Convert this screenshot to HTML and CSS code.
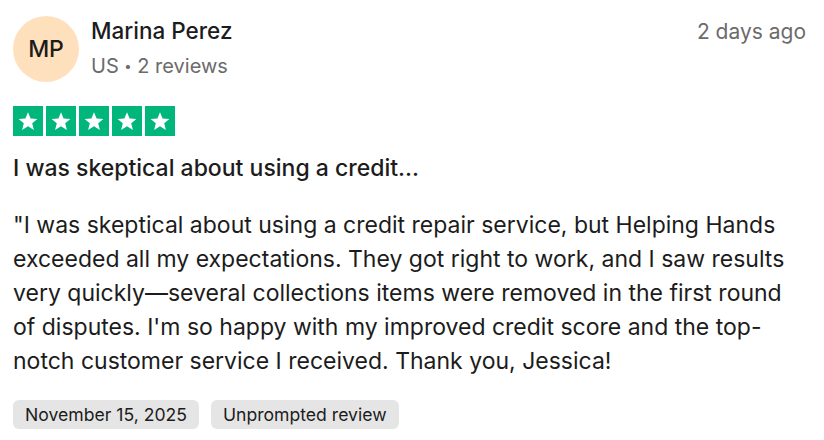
FILE: index.html
```html
<!DOCTYPE html>
<html lang="en">

<head>
    <meta charset="UTF-8">
    <title>Review</title>
    <link rel="stylesheet" href="styles.css">
</head>

<body>
    <article class="review">
        <header class="review-header">
            <div class="avatar">MP</div>
            <div class="consumer">
                <div class="consumer-name">Marina Perez</div>
                <div class="consumer-meta">US <span class="dot">&bull;</span> 2 reviews</div>
            </div>
            <time class="review-age">2 days ago</time>
        </header>

        <div class="stars">
            <span class="star"><svg viewBox="0 0 24 24"><path d="M12 3.2l2.6 6.3 6.8.5-5.2 4.3 1.7 6.7L12 17.3l-5.9 3.7 1.7-6.7-5.2-4.3 6.8-.5z"/></svg></span>
            <span class="star"><svg viewBox="0 0 24 24"><path d="M12 3.2l2.6 6.3 6.8.5-5.2 4.3 1.7 6.7L12 17.3l-5.9 3.7 1.7-6.7-5.2-4.3 6.8-.5z"/></svg></span>
            <span class="star"><svg viewBox="0 0 24 24"><path d="M12 3.2l2.6 6.3 6.8.5-5.2 4.3 1.7 6.7L12 17.3l-5.9 3.7 1.7-6.7-5.2-4.3 6.8-.5z"/></svg></span>
            <span class="star"><svg viewBox="0 0 24 24"><path d="M12 3.2l2.6 6.3 6.8.5-5.2 4.3 1.7 6.7L12 17.3l-5.9 3.7 1.7-6.7-5.2-4.3 6.8-.5z"/></svg></span>
            <span class="star"><svg viewBox="0 0 24 24"><path d="M12 3.2l2.6 6.3 6.8.5-5.2 4.3 1.7 6.7L12 17.3l-5.9 3.7 1.7-6.7-5.2-4.3 6.8-.5z"/></svg></span>
        </div>

        <h2 class="review-title">I was skeptical about using a credit...</h2>

        <p class="review-text">"I was skeptical about using a credit repair service, but Helping Hands exceeded all my expectations. They got right to work, and I saw results very quickly—several collections items were removed in the first round of disputes. I'm so happy with my improved credit score and the top-notch customer service I received. Thank you, Jessica!</p>

        <div class="tags">
            <span class="tag">November 15, 2025</span>
            <span class="tag">Unprompted review</span>
        </div>
    </article>
</body>

</html>
```

FILE: styles.css
```css
body {
    margin: 0;
    background-color: #fff;
    font-family: Inter, "Noto Sans", sans-serif;
    color: #1c1c1c;
}

.review {
    padding: 16px 0 0 13px;
    width: 793px;
}

.review-header {
    display: flex;
    align-items: flex-start;
}

.avatar {
    width: 66px;
    height: 66px;
    border-radius: 50%;
    background-color: #ffe0bd;
    display: flex;
    align-items: center;
    justify-content: center;
    font-size: 23px;
    font-weight: 500;
    color: #1c1c1c;
    flex-shrink: 0;
}

.consumer {
    margin-left: 12px;
    flex-grow: 1;
    padding-top: 1px;
}

.consumer-name {
    font-size: 22.5px;
    font-weight: 500;
    line-height: 28px;
}

.consumer-meta {
    font-size: 20px;
    line-height: 28px;
    margin-top: 7px;
    color: #6b6b6b;
}

.dot {
    font-size: 13px;
    vertical-align: 2px;
}

.review-age {
    font-size: 21px;
    color: #6b6b6b;
    line-height: 28px;
    padding-top: 2px;
}

.stars {
    display: flex;
    gap: 3px;
    margin-top: 24px;
}

.star {
    width: 30px;
    height: 30px;
    background-color: #00b67a;
    display: flex;
    align-items: center;
    justify-content: center;
}

.star svg {
    width: 24px;
    height: 24px;
    fill: #fff;
}

.review-title {
    font-size: 23px;
    font-weight: 500;
    line-height: 28px;
    margin: 18px 0 0;
}

.review-text {
    font-size: 23px;
    line-height: 34px;
    margin: 26px 0 0;
}

.tags {
    display: flex;
    gap: 12px;
    margin-top: 22px;
}

.tag {
    background-color: #e5e5e5;
    border-radius: 6px;
    padding: 0 12px;
    font-size: 17.6px;
    line-height: 29px;
}
```
